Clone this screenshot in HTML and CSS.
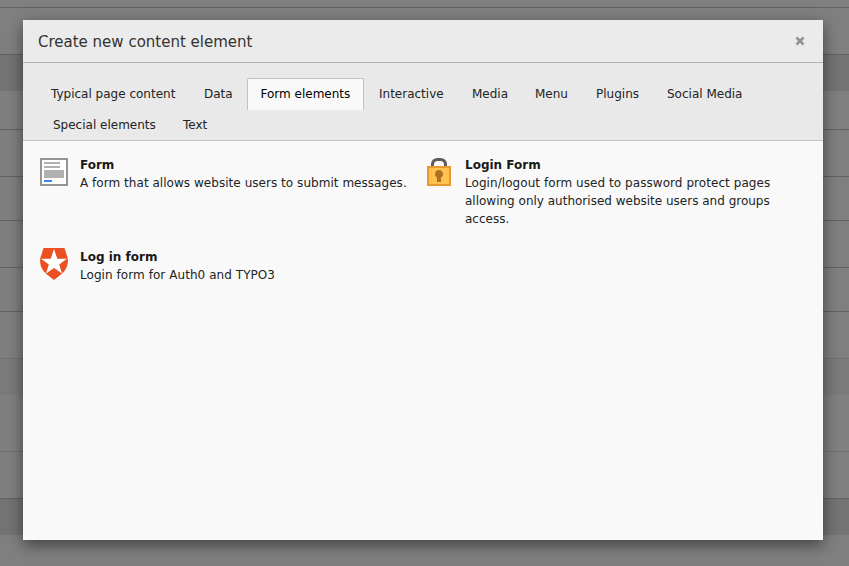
FILE: index.html
```html
<!DOCTYPE html>
<html lang="en">
<head>
<meta charset="utf-8">
<title>Create new content element</title>
<link rel="stylesheet" href="styles.css">
</head>
<body>
<div class="page">
  <div class="r h7"></div><div class="r h46"></div><div class="r h37 dark"></div><div class="r h38"></div><div class="r h46"></div><div class="r h43"></div><div class="r h46"></div><div class="r h43"></div><div class="r h46 faint"></div><div class="r h36 mid"></div><div class="r h57 faint"></div><div class="r h46"></div><div class="r h37 dark"></div>
</div>
<div class="modal" role="dialog">
  <header class="head"><h1>Create new content element</h1><button class="close" aria-label="Close"><svg width="10" height="10" viewBox="0 0 10 10"><path d="M1.500 1.500l7 7M8.500 1.500l-7 7" stroke="#929292" stroke-width="2.500"/></svg></button></header>
  <nav class="tabs">
    <div class="tabrow"><a class="t1">Typical page content</a><a class="t2">Data</a><a class="t3 active">Form elements</a><a class="t4">Interactive</a><a class="t5">Media</a><a class="t6">Menu</a><a class="t7">Plugins</a><a class="t8">Social Media</a></div>
    <div class="tabrow second"><a class="t9">Special elements</a><a class="t10">Text</a></div>
  </nav>
  <main class="items">
    <article class="item">
      <svg class="icon" width="32" height="32" viewBox="0 0 32 32"><path fill="#959595" d="M2 2h28v28H2z"/><path fill="#fff" d="M4 4h24v24H4z"/><path fill="#b0b0b0" d="M6 6h16v2H6zM6 10h16v2H6zM6 14h20v8H6z"/><path fill="#4285f8" d="M6 24h8v2H6z"/></svg>
      <div><h2>Form</h2><p class="wide">A form that allows website users to submit messages.</p></div>
    </article>
    <article class="item">
      <svg class="icon" width="32" height="32" viewBox="0 0 32 32"><path d="M9.500 11V8.500c0-3 2-5 5-5h3c3 0 5 2 5 5V11" fill="none" stroke="#5c5c5c" stroke-width="3"/><path fill="#e8982f" d="M4 10h24v20H4z"/><path fill="#ffc14f" d="M6 12h20v16H6z"/><path fill="#ab7223" d="M16 14a4 4 0 0 0-2 7.460V26h4v-4.540A4 4 0 0 0 16 14z"/></svg>
      <div><h2>Login Form</h2><p><span class="wider">Login/logout form used to password protect pages</span><br>allowing only authorised website users and groups<br>access.</p></div>
    </article>
    <article class="item">
      <svg class="icon" width="32" height="32" viewBox="0 0 32 32"><path fill="#eb4f22" d="M5.500 0h21l3 9.500c1.500 7-1.500 13-6.500 17l-7 5.500-7-5.500C4 22.500 1 16.500 2.500 9.500z"/><path fill="#fff" d="M16 1l3.300 9.800h9.600l-7.700 5.600 2.800 9.200L16 20l-8 5.600 2.800-9.200-7.700-5.600h9.600z"/></svg>
      <div><h2>Log in form</h2><p class="wider">Login form for Auth0 and TYPO3</p></div>
    </article>
  </main>
</div>
</body>
</html>
```
FILE: styles.css
```css
* { box-sizing: border-box; }
body { margin: 0; width: 849px; height: 566px; overflow: hidden; background: #808080; font: 12px/18px "DejaVu Sans", sans-serif; color: #212424; }
.page { height: 566px; }
.r { border-bottom: 1px solid #626262; box-sizing: content-box; }
.faint { border-color: #717171; }
.dark, .mid { border: 0; background: #747474; }
.mid { background: #7b7b7b; }
.h7 { height: 7px; }
.h36 { height: 36px; }
.h37 { height: 36px; }
.h38 { height: 38px; }
.h43 { height: 43px; }
.h46 { height: 46px; }
.h57 { height: 56px; }
.modal { position: absolute; left: 23px; top: 20px; width: 800px; height: 520px; background: #f9f9f9; box-shadow: 0 5px 15px rgba(0,0,0,.5); }
.head { height: 43px; padding: 0 18px 0 15px; background: #ebebeb; border-bottom: 1px solid #b3b3b3; display: flex; align-items: center; justify-content: space-between; }
h1 { margin: 0; padding-top: 2px; font-size: 15px; line-height: 22px; font-weight: 400; color: #333; }
.close { border: 0; padding: 0; background: none; width: 10px; height: 10px; display: flex; }
.tabs { height: 78px; padding: 15px 14px 0; background: #e9e9e9; border-bottom: 1px solid #c1c1c1; }
.tabrow { display: flex; height: 32px; }
.tabrow a { padding: 6px 0 0 14px; border: 1px solid transparent; border-bottom: 0; white-space: nowrap; flex: none; }
.tabrow .t1 { width: 152px; padding-left: 13px; }
.tabrow .active { padding-left: 12.500px; border-color: #c1c1c1; background: #f9f9f9; color: #000; border-radius: 2px 2px 0 0; }
.t2 { width: 58px; }
.t3 { width: 117px; }
.t4 { width: 93px; }
.t5 { width: 63px; }
.t6 { width: 61px; }
.t7 { width: 71px; }
.t8 { width: 105px; }
.second { height: 30px; padding-left: 1px; margin-top: -1px; }
.t9 { width: 130px; }
.t10 { width: 60px; }
.items { padding: 15px 15px 0; display: grid; grid-template-columns: 385px 385px; grid-template-rows: 92px 92px; }
.item { display: flex; gap: 10px; }
.icon { flex: none; display: block; }
.item p, .item h2 { margin: 0; font-size: 12px; line-height: 18px; white-space: nowrap; }
.item h2 { color: #191919; }
.wide { letter-spacing: .04px; }
.wider { letter-spacing: .06px; }
```
